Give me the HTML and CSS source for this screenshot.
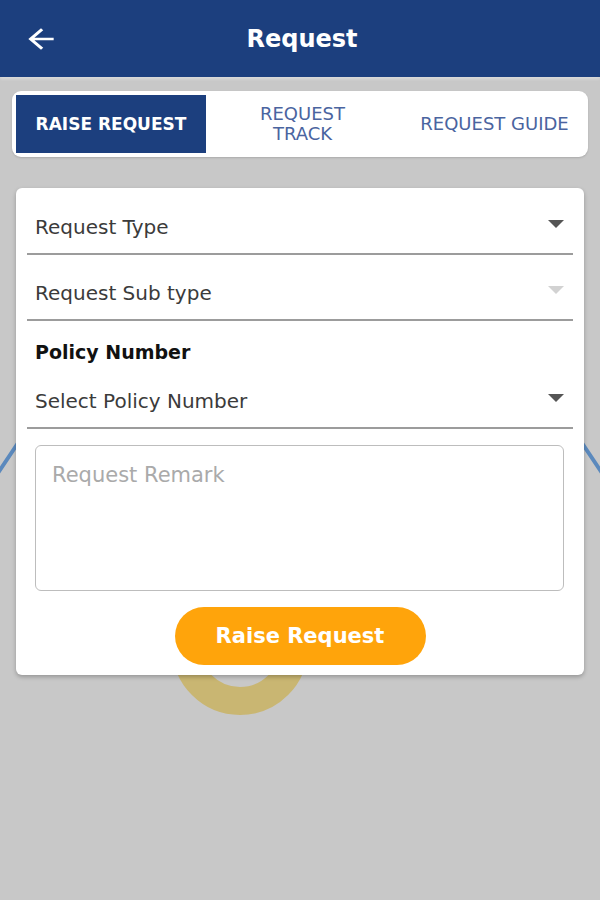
FILE: index.html
```html
<!DOCTYPE html>
<html lang="en">
<head>
  <meta charset="UTF-8">
  <meta name="viewport" content="width=device-width, initial-scale=1.0">
  <title>Request</title>
  <link rel="stylesheet" href="styles.css">
</head>
<body>
  <div class="screen">
    <svg class="bg-logo" width="600" height="900" viewBox="0 0 600 900">
      <polyline points="-10,485 100,320 300,260 500,320 610,485" fill="none" stroke="#5b89bd" stroke-width="4" stroke-linejoin="round"/>
      <circle cx="240" cy="647" r="54" fill="none" stroke="#c9b672" stroke-width="28"/>
    </svg>

    <div class="header">
      <div class="back">
        <svg width="38" height="32" viewBox="0 0 24 24" preserveAspectRatio="none"><path d="M20 11H7.83l5.59-5.59L12 4l-8 8 8 8 1.41-1.41L7.83 13H20v-2z" fill="#fff"/></svg>
      </div>
      <div class="title">Request</div>
      <div></div>
    </div>

    <div class="tabs">
      <div class="tab active">RAISE REQUEST</div>
      <div class="tab">REQUEST<br>TRACK</div>
      <div class="tab">REQUEST GUIDE</div>
    </div>

    <div class="card">
      <div class="select">
        <span>Request Type</span>
        <span class="caret"></span>
      </div>
      <div class="select">
        <span>Request Sub type</span>
        <span class="caret disabled"></span>
      </div>
      <div class="label">Policy Number</div>
      <div class="select">
        <span>Select Policy Number</span>
        <span class="caret"></span>
      </div>
      <textarea class="remark" placeholder="Request Remark"></textarea>
      <div class="actions">
        <button class="raise">Raise Request</button>
      </div>
    </div>
  </div>
</body>
</html>
```

FILE: styles.css
```css
body {
  margin: 0;
  background-color: #c8c8c8;
  font-family: "DejaVu Sans", Roboto, sans-serif;
}
.screen {
  position: relative;
  width: 600px;
  height: 900px;
  overflow: hidden;
}
.bg-logo {
  position: absolute;
  left: 0;
  top: 0;
}
.header {
  position: relative;
  display: grid;
  grid-template-columns: 1fr auto 1fr;
  align-items: center;
  height: 77px;
  background-color: #1c3f7e;
  box-shadow: 0 2px 3px rgba(255, 255, 255, 0.35);
}
.back {
  display: flex;
  padding-left: 22px;
  padding-top: 1px;
}
.title {
  color: #fff;
  font-size: 24px;
  font-weight: bold;
  padding-left: 4px;
}
.tabs {
  position: relative;
  display: grid;
  grid-template-columns: 190px 1fr 1fr;
  margin: 14px 12px 0;
  padding: 4px;
  height: 58px;
  background-color: #fff;
  border-radius: 9px;
  box-shadow: 0 1px 2px rgba(0, 0, 0, 0.15);
}
.tab {
  display: flex;
  align-items: center;
  justify-content: center;
  text-align: center;
  font-size: 18px;
  line-height: 20px;
  color: #4a64a0;
}
.tab:nth-child(2) {
  padding-left: 4px;
}
.tab:nth-child(3) {
  padding-left: 10px;
}
.tab.active {
  background-color: #1c3f7e;
  color: #fff;
  font-size: 17px;
  font-weight: bold;
}
.card {
  position: relative;
  margin: 31px 16px 0;
  padding: 1px 11px 10px;
  background-color: #fff;
  border-radius: 6px;
  box-shadow: 0 2px 4px rgba(0, 0, 0, 0.25);
}
.select {
  display: flex;
  align-items: center;
  justify-content: space-between;
  height: 64px;
  padding: 0 9px 0 8px;
  border-bottom: 2px solid #9c9c9c;
  font-size: 20px;
  color: #3b3b3b;
}
.select span:first-child {
  margin-top: 12px;
}
.caret {
  width: 0;
  height: 0;
  margin-top: 6px;
  border-left: 8px solid transparent;
  border-right: 8px solid transparent;
  border-top: 8px solid #555;
}
.caret.disabled {
  border-top-color: #d2d2d2;
}
.label {
  margin-top: 20px;
  padding-left: 8px;
  line-height: 22px;
  font-size: 19px;
  font-weight: bold;
  color: #111;
}
.remark {
  display: block;
  box-sizing: border-box;
  width: 529px;
  height: 146px;
  margin: 16px 0 0 8px;
  padding: 17px 16px;
  border: 1.5px solid #bdbdbd;
  border-radius: 6px;
  font-family: "DejaVu Sans", Roboto, sans-serif;
  font-size: 21px;
  line-height: 24px;
  resize: none;
  outline: none;
}
.remark::placeholder {
  color: #aaa;
}
.actions {
  display: flex;
  justify-content: center;
  margin-top: 16px;
}
.raise {
  width: 251px;
  height: 58px;
  border: none;
  border-radius: 29px;
  background-color: #ffa40b;
  color: #fff;
  font-family: "DejaVu Sans", Roboto, sans-serif;
  font-size: 21px;
  font-weight: bold;
}
```
